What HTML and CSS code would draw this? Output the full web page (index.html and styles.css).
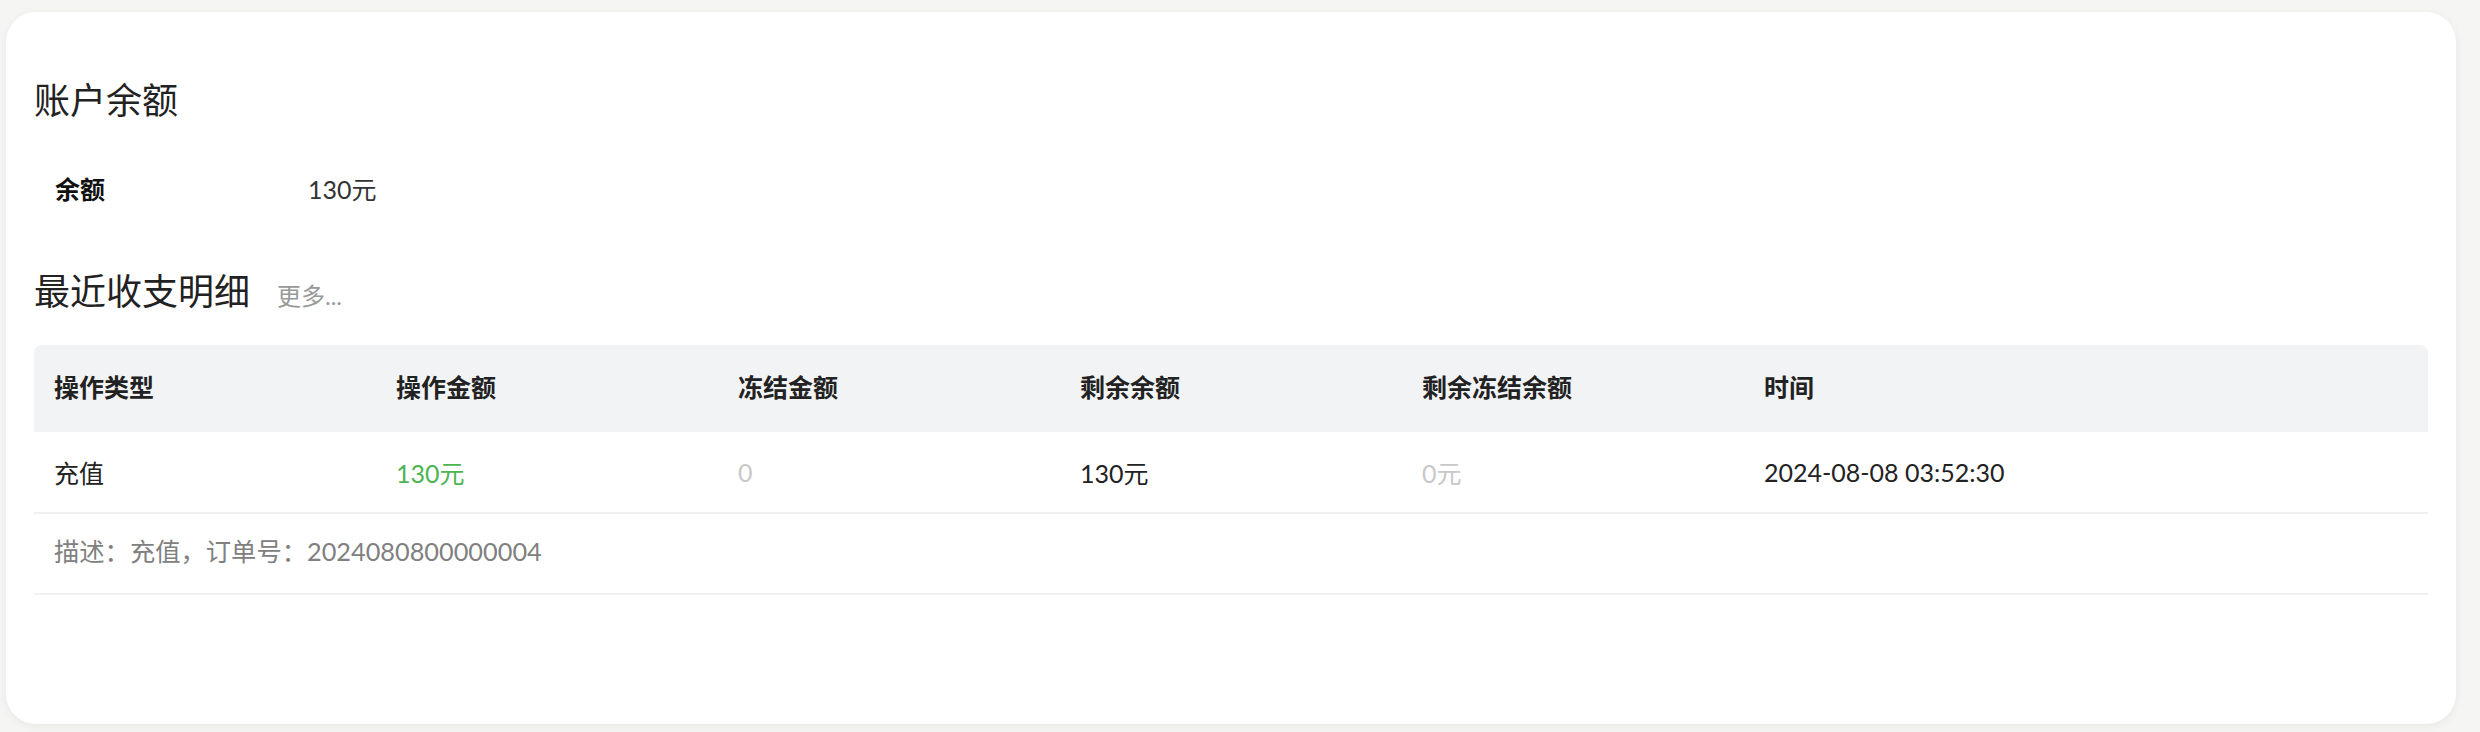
FILE: index.html
```html
<!DOCTYPE html>
<html lang="zh-CN">
<head>
<meta charset="utf-8">
<title>账户余额</title>
<link rel="stylesheet" href="styles.css">
</head>
<body>
<div class="card">
  <h2 class="title">账户余额</h2>
  <div class="balance-row">
    <span class="balance-label">余额</span>
    <span class="balance-value">130元</span>
  </div>
  <div class="section-head">
    <h2 class="title">最近收支明细</h2>
    <a class="more">更多...</a>
  </div>
  <div class="table">
    <div class="thead">
      <div class="cell">操作类型</div>
      <div class="cell">操作金额</div>
      <div class="cell">冻结金额</div>
      <div class="cell">剩余余额</div>
      <div class="cell">剩余冻结余额</div>
      <div class="cell">时间</div>
    </div>
    <div class="trow">
      <div class="cell">充值</div>
      <div class="cell green">130元</div>
      <div class="cell muted">0</div>
      <div class="cell">130元</div>
      <div class="cell muted">0元</div>
      <div class="cell">2024-08-08 03:52:30</div>
    </div>
    <div class="tdesc">描述：充值，订单号：2024080800000004</div>
  </div>
</div>
</body>
</html>
```

FILE: styles.css
```css
* { box-sizing: border-box; }
html, body { margin: 0; }
body {
  background: #f5f5f3;
  padding: 12px 24px 8px 6px;
  font-family: Lato, "Noto Sans CJK SC", sans-serif;
  color: #222;
  height: 732px;
}
.card {
  background: #fff;
  border-radius: 30px;
  height: 712px;
  padding: 0 28px;
  box-shadow: 0 2px 10px rgba(0,0,0,0.06);
  overflow: hidden;
}
.title {
  margin: 0;
  font-size: 36px;
  font-weight: 400;
  line-height: 50px;
  color: #222;
}
.card > .title { padding-top: 63px; }
.balance-row {
  display: flex;
  margin-top: 44px;
  padding-left: 21px;
  font-size: 25px;
  line-height: 40px;
}
.balance-label {
  width: 253px;
  font-weight: 700;
  color: #111;
}
.balance-value { color: #333; }
.section-head {
  display: flex;
  align-items: baseline;
  gap: 27px;
  margin-top: 57px;
}
.more {
  font-size: 24px;
  color: #999;
}
.table { margin-top: 29px; }
.thead, .trow {
  display: grid;
  grid-template-columns: 1fr 1fr 1fr 1fr 1fr 2fr;
  align-items: center;
  font-size: 25px;
}
.thead {
  height: 87px;
  padding-bottom: 6px;
  background: #f2f3f5;
  border-radius: 8px 8px 0 0;
  font-weight: 700;
  color: #222;
}
.trow {
  height: 82px;
  border-bottom: 2px solid #f0f0f0;
  color: #222;
}
.cell { padding-left: 20px; }
.green { color: #4cb551; }
.muted { color: #c8c8c8; }
.tdesc {
  height: 81px;
  display: flex;
  align-items: center;
  padding-left: 20px;
  padding-bottom: 7px;
  font-size: 25.3px;
  color: #808080;
  border-bottom: 2px solid #f0f0f0;
}
```
